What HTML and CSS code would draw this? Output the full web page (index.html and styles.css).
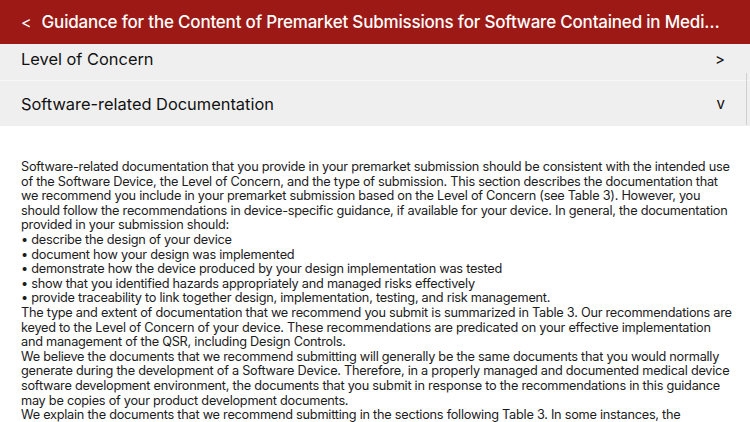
FILE: index.html
```html
<!DOCTYPE html>
<html lang="en">
<head>
<meta charset="UTF-8" />
<title>Guidance</title>
<meta name="viewport" content="width=device-width, initial-scale=1" />
<link rel="stylesheet" href="styles.css">
</head>
<body>

<div class="topbar">
  <span class="back">&lt;</span>
  <span class="title">Guidance for the Content of Premarket Submissions for Software Contained in Medical Devices</span>
</div>

<div class="sections">
  <div class="row first">
    <span>Level of Concern</span>
    <span class="arrow">&gt;</span>
  </div>
  <div class="row open">
    <span>Software-related Documentation</span>
    <span class="arrow">v</span>
  </div>
  <div class="scroll-ind"></div>
</div>

<div class="content">
  Software-related documentation that you provide in your premarket submission should be consistent with the intended use<br>
  of the Software Device, the Level of Concern, and the type of submission. This section describes the documentation that<br>
  we recommend you include in your premarket submission based on the Level of Concern (see Table 3). However, you<br>
  should follow the recommendations in device-specific guidance, if available for your device. In general, the documentation<br>
  provided in your submission should:<br>
  &bull; describe the design of your device<br>
  &bull; document how your design was implemented<br>
  &bull; demonstrate how the device produced by your design implementation was tested<br>
  &bull; show that you identified hazards appropriately and managed risks effectively<br>
  &bull; provide traceability to link together design, implementation, testing, and risk management.<br>
  The type and extent of documentation that we recommend you submit is summarized in Table 3. Our recommendations are<br>
  keyed to the Level of Concern of your device. These recommendations are predicated on your effective implementation<br>
  and management of the QSR, including Design Controls.<br>
  We believe the documents that we recommend submitting will generally be the same documents that you would normally<br>
  generate during the development of a Software Device. Therefore, in a properly managed and documented medical device<br>
  software development environment, the documents that you submit in response to the recommendations in this guidance<br>
  may be copies of your product development documents.<br>
  We explain the documents that we recommend submitting in the sections following Table 3. In some instances, the
</div>

</body>
</html>
```

FILE: styles.css
```css
html, body { margin:0; padding:0; }
body { font-family: Inter, "Noto Sans", sans-serif; background:#fff; width:750px; height:422px; overflow:hidden; color:#1c1c1c; }

.topbar {
  height:44px; background:#9d1915; color:#fff;
  display:flex; align-items:center; padding:0 26px 0 21px; box-sizing:border-box;
}
.back { font-size:16px; margin-right:10px; }
.title {
  font-size:17px; font-weight:500; letter-spacing:-0.2px; white-space:nowrap; overflow:hidden; text-overflow:ellipsis; flex:1;
}

.sections { position:relative; }
.row {
  background:#efefef; display:flex; justify-content:space-between; align-items:center;
  padding:0 25px 0 21px; font-size:16.4px; color:#111; height:45px; box-sizing:border-box;
}
.row.first { height:37px; padding-bottom:6px; border-bottom:1px solid #f7f7f7; }
.arrow { font-size:15px; }
.scroll-ind {
  position:absolute; right:3px; top:29px; width:1px; height:52px; background:#d0d0d0;
}

.content {
  padding:34px 10px 0 21px; font-size:12.75px; letter-spacing:-0.26px; line-height:14.6px; white-space:nowrap;
}
```
